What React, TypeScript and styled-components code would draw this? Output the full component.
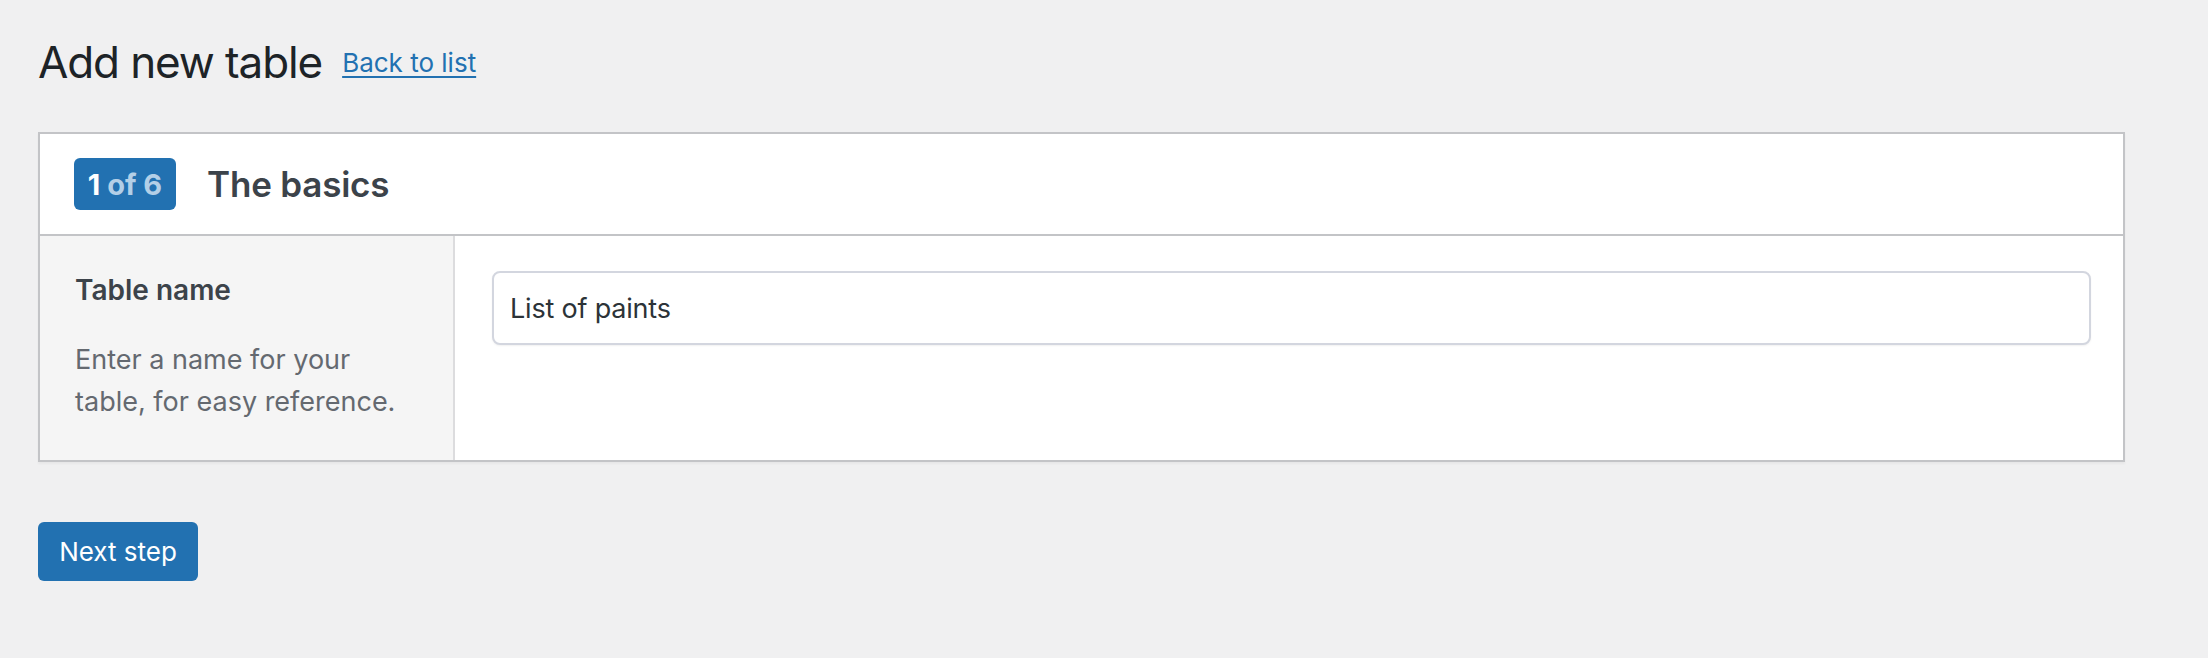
import styled, { createGlobalStyle } from 'styled-components'

const GlobalStyle = createGlobalStyle`
  body {
    margin: 0;
    background: #f0f0f1;
    font-family: Inter, "Noto Sans", sans-serif;
    color: #3c434a;
  }
`;

const Wrap = styled.div`
  padding: 32px 83px 40px 38px;
`;

const TitleRow = styled.div`
  display: flex;
  align-items: center;
  gap: 20px;
  margin-bottom: 40px;
`;

const PageTitle = styled.h1`
  margin: 0;
  font-size: 44px;
  font-weight: 400;
  line-height: 60px;
  color: #1d2327;
  letter-spacing: -1.1px;
`;

const BackLink = styled.a`
  font-size: 26px;
  color: #2271b1;
  text-decoration: underline;
  text-underline-offset: 4px;
  text-decoration-thickness: 2px;
  cursor: pointer;
`;

const Card = styled.div`
  background: #fff;
  border: 2px solid #c3c4c7;
  box-shadow: 0 2px 2px rgba(0, 0, 0, 0.04);
`;

const CardHeader = styled.div`
  display: flex;
  align-items: center;
  gap: 31px;
  height: 100px;
  padding: 0 34px;
  border-bottom: 2px solid #c3c4c7;
`;

const StepBadge = styled.span`
  display: inline-flex;
  align-items: center;
  justify-content: center;
  width: 102px;
  height: 52px;
  border-radius: 6px;
  background: #2271b1;
  color: #fff;
  font-size: 29px;
  font-weight: 700;
  white-space: pre;
`;

const BadgeMuted = styled.span`
  color: #b3cfe7;
`;

const StepTitle = styled.h2`
  margin: 0;
  font-size: 35px;
  font-weight: 600;
  color: #3c434a;
  letter-spacing: -0.2px;
`;

const FieldRow = styled.div`
  display: grid;
  grid-template-columns: 415px 1fr;
  min-height: 224px;
`;

const FieldLabel = styled.div`
  background: #f5f5f5;
  border-right: 2px solid #dcdcde;
  padding: 34px 43px 0 35px;
`;

const LabelTitle = styled.div`
  font-size: 28px;
  font-weight: 600;
  line-height: 40px;
  color: #3c434a;
  margin-bottom: 29px;
`;

const LabelHint = styled.p`
  margin: 0;
  font-size: 27px;
  line-height: 42px;
  color: #646970;
`;

const FieldInput = styled.div`
  padding: 35px 32px 0 37px;
`;

const TextInput = styled.input`
  box-sizing: border-box;
  width: 100%;
  height: 74px;
  padding: 0 16px;
  border: 2px solid #d3d6df;
  border-radius: 8px;
  box-shadow: 0 1px 2px rgba(0, 0, 0, 0.06);
  font-family: inherit;
  font-size: 27px;
  color: #2c3338;
  letter-spacing: -0.2px;
  outline: none;
`;

const Actions = styled.div`
  margin-top: 60px;
`;

const PrimaryButton = styled.button`
  width: 160px;
  height: 59px;
  border: none;
  border-radius: 6px;
  background: #2271b1;
  color: #fff;
  font-family: inherit;
  font-size: 26px;
  cursor: pointer;
`;

export default function App() {
  return (
    <>
      <GlobalStyle />
      <Wrap>
        <TitleRow>
          <PageTitle>Add new table</PageTitle>
          <BackLink>Back to list</BackLink>
        </TitleRow>
        <Card>
          <CardHeader>
            <StepBadge>1 <BadgeMuted>of 6</BadgeMuted></StepBadge>
            <StepTitle>The basics</StepTitle>
          </CardHeader>
          <FieldRow>
            <FieldLabel>
              <LabelTitle>Table name</LabelTitle>
              <LabelHint>Enter a name for your table, for easy reference.</LabelHint>
            </FieldLabel>
            <FieldInput>
              <TextInput defaultValue="List of paints" />
            </FieldInput>
          </FieldRow>
        </Card>
        <Actions>
          <PrimaryButton>Next step</PrimaryButton>
        </Actions>
      </Wrap>
    </>
  )
}
